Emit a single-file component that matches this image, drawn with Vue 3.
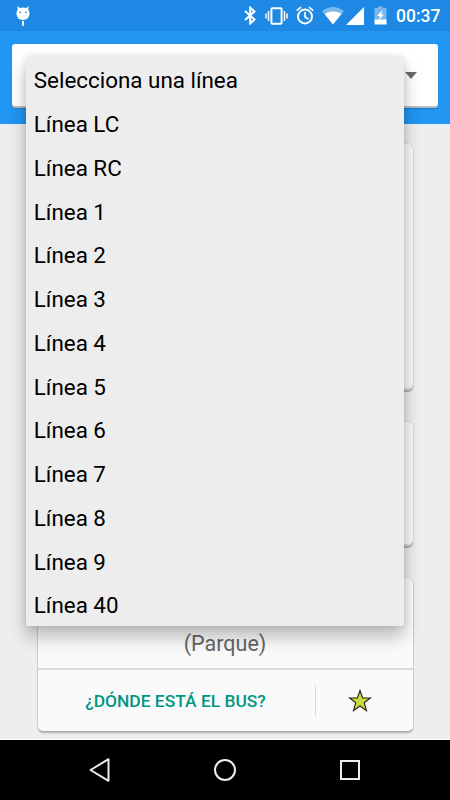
<script setup>
const lines = [
  'Selecciona una línea',
  'Línea LC',
  'Línea RC',
  'Línea 1',
  'Línea 2',
  'Línea 3',
  'Línea 4',
  'Línea 5',
  'Línea 6',
  'Línea 7',
  'Línea 8',
  'Línea 9',
  'Línea 40',
]
</script>

<template>
  <div class="screen">
    <header class="status">
      <svg class="cat" width="14" height="21" viewBox="0 0 14 21">
        <path d="M1.500 0 3.800 2Q7 .8 10.200 2L12.500 0 12.300 3.800Q13.600 5.500 13.600 7.800 13 14 7 14T.4 7.800Q.4 5.500 1.700 3.800Z" fill="#fff" />
        <path d="M3.300 6.300h1.800M8.900 6.300h1.800" stroke="#1e88e5" stroke-width="1.300" />
        <path d="M7 15v4.800" stroke="#fff" stroke-width="2" />
      </svg>
      <div class="tray">
        <svg class="bt" width="12" height="19" viewBox="0 0 12 19">
          <path d="M1 5 10.500 13.500 6.200 17.500V1.500L10.500 5.500 1 14" fill="none" stroke="#fff" stroke-width="2" />
        </svg>
        <svg class="vib" width="23" height="18" viewBox="0 0 23 18">
          <rect x="6.400" y="1.300" width="10.200" height="15.400" rx="1" fill="none" stroke="#fff" stroke-width="2" />
          <path d="M3.500 4v10M19.500 4v10M1 6.500v5M22 6.500v5" stroke="#fff" stroke-width="1.500" />
        </svg>
        <svg class="alarm" width="18" height="19" viewBox="0 0 18 19">
          <circle cx="9" cy="10.500" r="7" fill="none" stroke="#fff" stroke-width="1.900" />
          <path d="M9 6v5l3.500 2.200M.7 4.700 5 1.200M17.300 4.700 13 1.200" fill="none" stroke="#fff" stroke-width="1.600" />
        </svg>
        <svg class="wifi" width="22" height="18" viewBox="0 0 22 18">
          <path d="M0 4Q11-4 22 4L11 17.500Z" fill="#78b8ef" />
          <path d="M2.500 6.800Q11 1.500 19.500 6.800L11 17.500Z" fill="#fff" />
        </svg>
        <svg class="signal" width="18" height="18" viewBox="0 0 18 18">
          <path d="M0 18 18 0V18Z" fill="#fff" />
        </svg>
        <svg class="battery" width="13" height="19" viewBox="0 0 13 19">
          <path d="M.5 2H4V.5H9V2H12.500V14H.5Z" fill="#78b8ef" />
          <path d="M.5 13.500h12v5H.5Z" fill="#fff" />
          <path d="M8.500 4 3 10h3L4.700 14.500 10 8.500H7.200Z" fill="#fff" />
        </svg>
        <span class="clock">00:37</span>
      </div>
    </header>

    <div class="toolbar">
      <div class="spinner">
        <svg width="12" height="7" viewBox="0 0 12 7"><path d="M0 0H12L6 7Z" fill="#6a6a6a" /></svg>
      </div>
    </div>

    <main class="content">
      <section class="card first"></section>
      <section class="card second"></section>
      <section class="card stop">
        <div class="place">(Parque)</div>
        <div class="actions">
          <span class="where">¿DÓNDE ESTÁ EL BUS?</span>
          <span class="fav">
            <svg width="24" height="24" viewBox="0 0 24 24">
              <path d="M12 1.500 14.600 9H22.400L16.200 13.700 18.500 21.600 12 17 5.500 21.600 7.800 13.700 1.600 9H9.400Z" fill="#cddc39" stroke="#20201c" stroke-width="1.100" />
            </svg>
          </span>
        </div>
      </section>
    </main>

    <ul class="menu">
      <li v-for="line in lines" :key="line">{{ line }}</li>
    </ul>

    <nav class="nav">
      <svg width="22" height="26" viewBox="0 0 22 26">
        <path d="M1.500 13 19.500 2.200V23.800Z" fill="none" stroke="#eee" stroke-width="2" stroke-linejoin="round" />
      </svg>
      <svg width="24" height="24" viewBox="0 0 24 24">
        <circle cx="12" cy="12" r="10" fill="none" stroke="#eee" stroke-width="2" />
      </svg>
      <svg width="22" height="22" viewBox="0 0 22 22">
        <rect x="2" y="2" width="18" height="18" fill="none" stroke="#eee" stroke-width="2" />
      </svg>
    </nav>
  </div>
</template>

<style>
body {
  margin: 0;
}
</style>

<style scoped>
.screen {
  position: relative;
  width: 450px;
  height: 800px;
  overflow: hidden;
  display: flex;
  flex-direction: column;
  background: #eee;
  font-family: Roboto, "Liberation Sans", sans-serif;
}
svg {
  display: block;
  flex: none;
}
.status {
  height: 31px;
  flex: none;
  box-sizing: border-box;
  background: #1e88e5;
  display: flex;
  justify-content: space-between;
  padding: 6px 10px 0 15.500px;
}
.tray {
  display: flex;
  align-items: flex-start;
}
.bt {
  margin-right: 9px;
}
.vib {
  margin: 1px 8px 0 0;
}
.alarm {
  margin-right: 8px;
}
.wifi {
  margin: 1px 2px 0 0;
}
.signal {
  margin: 1px 10px 0 0;
}
.battery {
  margin-right: 9px;
}
.clock {
  width: 44px;
  font-size: 17.500px;
  font-weight: 500;
  line-height: 21px;
  color: #fff;
  white-space: nowrap;
}
.toolbar {
  height: 94px;
  flex: none;
  box-sizing: border-box;
  background: #2196f3;
  border-bottom: 1px solid #e4f1fb;
  padding: 13px 12px 0;
}
.spinner {
  height: 62px;
  background: #fff;
  border-radius: 3px;
  box-shadow: 0 2px 0 #b9bec2, 0 3px 1px rgba(0, 0, 0, 0.2);
  display: flex;
  align-items: center;
  justify-content: flex-end;
  padding-right: 21px;
}
.content {
  flex: 1;
  min-height: 0;
  box-sizing: border-box;
  padding: 19px 37.500px 0;
  border-bottom: 1px solid #fff;
}
.card {
  background: #fafafa;
  border-radius: 5px;
  box-shadow: 0 0 0 1px rgba(0, 0, 0, 0.07), 0 2px 2px rgba(0, 0, 0, 0.25);
}
.first {
  height: 246px;
  margin-bottom: 32px;
}
.second {
  height: 124px;
  margin-bottom: 32px;
}
.first,
.second {
  box-shadow: 0 0 0 1px rgba(0, 0, 0, 0.06), inset 0 -2px 0 #dcdcdc, 0 2px 1px rgba(0, 0, 0, 0.25);
}
.stop {
  height: 153px;
  display: flex;
  flex-direction: column;
}
.place {
  height: 92px;
  box-sizing: border-box;
  padding-top: 52px;
  border-bottom: 2px solid #dadada;
  text-align: center;
  font-size: 21.500px;
  line-height: 27px;
  color: #656565;
}
.actions {
  flex: 1;
  display: flex;
  align-items: center;
}
.where {
  width: 276px;
  padding-right: 1.500px;
  text-align: center;
  font-size: 17.400px;
  font-weight: 500;
  color: #009682;
}
.fav {
  flex: 1;
  height: 31px;
  border-left: 1px solid #d8d8d8;
  display: flex;
  align-items: center;
  justify-content: center;
  padding-right: 8px;
}
.menu {
  position: absolute;
  left: 26px;
  top: 57px;
  width: 378px;
  height: 569px;
  box-sizing: border-box;
  margin: 0;
  padding: 1.250px 7.800px 0;
  list-style: none;
  background: #ededed;
  border-radius: 2px;
  box-shadow: 0 11px 18px rgba(0, 0, 0, 0.25), 0 0 7px rgba(0, 0, 0, 0.12);
}
.menu li {
  height: 43.770px;
  line-height: 44px;
  font-size: 22.400px;
  color: #000;
}
.nav {
  height: 60px;
  flex: none;
  background: #000;
  display: flex;
  align-items: center;
  justify-content: space-between;
  padding: 0 89px;
}
</style>
